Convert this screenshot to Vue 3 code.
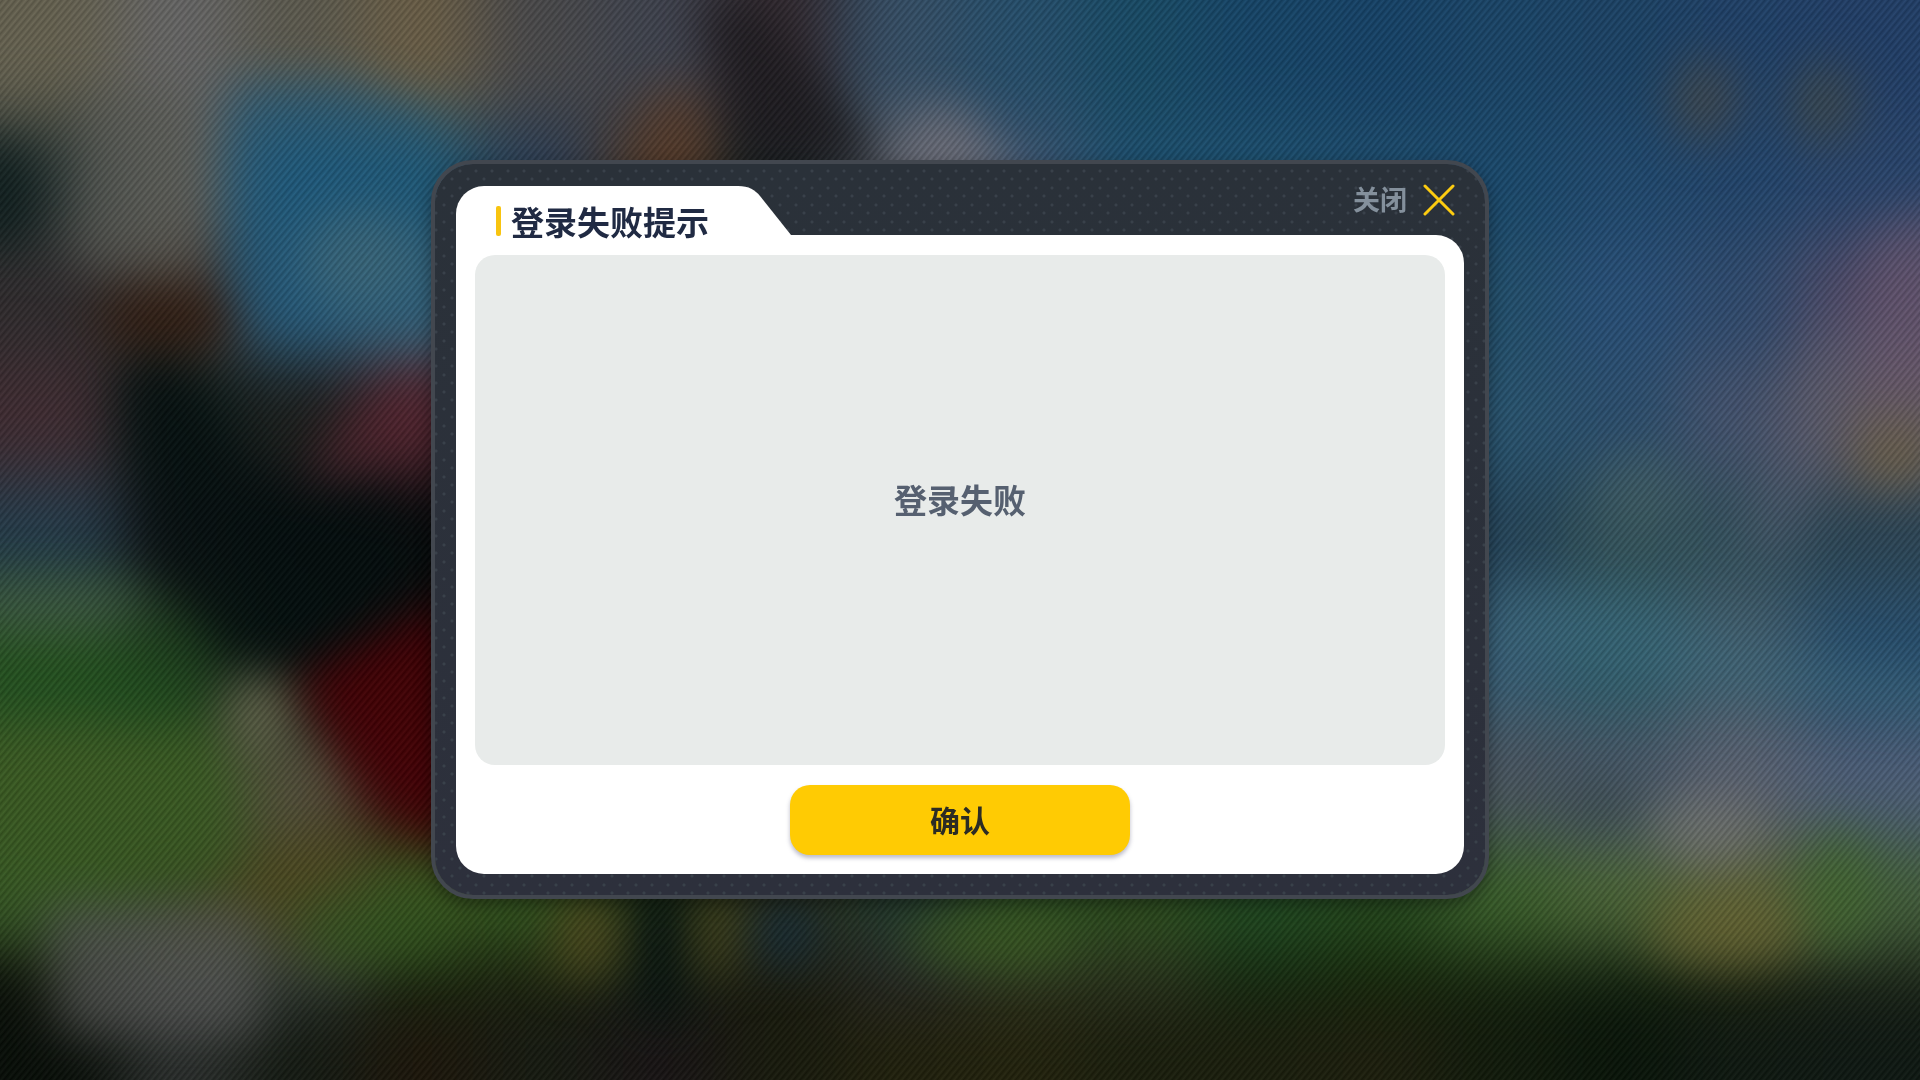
<script setup>
import { ref } from 'vue'

const open = ref(true)
const close = () => {
  open.value = false
}

// Soft scenery: a coarse colour grid plus a few blobs, blurred together.
const columnWidth = 120
const rowEdges = [0, 120, 240, 360, 480, 590, 720, 840, 950, 1000, 1080]
const palette = [
  '686452 686868 5e5c50 6c6048 4a4a4c 404450 342a30 365068 26506e 184c68 16466a 16446a 1a466a 1c4468 20426a 22406a',
  '2c3836 5e605c 1e5a7c 1e5874 2a3c54 4e3828 122020 5c6470 3a5470 1c5070 1c5070 1c4c6e 1a4a6e 204a70 22466e 2a466e',
  '302c2e 3c2e26 2c5a78 3c6478 30485c 2c2c34 202428 303c48 30506c 24506c 24506c 24506c 22506e 28507a 304c70 524c6a',
  '402c32 0c1c1a 1c1e1c 4c222c 20181c 101416 202428 303c48 30506c 24506c 24506c 24506c 285470 2c5070 465470 645c62',
  '243c4c 14181c 040c0e 06080a 04080a 04080a 202428 303c48 30506c 24506c 24506c 26465a 24445a 34545c 34525e 2c4656',
  '2c5424 1c3c1c 081410 120404 200404 200404 202428 303c48 30506c 24506c 2c5a70 386074 386078 30606e 446070 285070',
  '3c5c24 3a5c24 54503c 380406 340404 340404 202428 303c48 30506c 24506c 3c5460 485868 4a5660 485868 5c6474 4e607a',
  '345624 384e22 4a4822 38561e 30541e 1c3418 2c3018 20382c 2c5020 2c4c1c 204a20 24481c 3a602a 4c6638 5c6438 44603c',
  '181c10 484a48 3a4440 16280e 1c200c 141c10 18180c 28282a 303824 2c3420 122a0e 122608 14240c 10200c 1c240e 1c2416',
  '080e08 2a2e2c 141a12 1c160a 161a10 181414 181a0c 20200c 22220c 1a1e0c 1a1e0c 1c1e0c 101a0a 081408 0e1810 0e1812'
]

const cells = palette.flatMap((line, row) => {
  const isFirstRow = row === 0
  const isLastRow = row === palette.length - 1
  const top = rowEdges[row] - (isFirstRow ? 120 : 0)
  const bottom = rowEdges[row + 1] + (isLastRow ? 120 : 0)
  return line.split(' ').map((hex, col) => ({
    id: `${row}-${col}`,
    x: col === 0 ? -120 : col * columnWidth,
    y: top,
    width: columnWidth + (col === 0 || col === 15 ? 120 : 1),
    height: bottom - top + 1,
    fill: `#${hex}`
  }))
})
</script>

<template>
  <main class="page">
    <svg class="scenery" viewBox="0 0 1920 1080" preserveAspectRatio="none" aria-hidden="true">
      <defs>
        <filter id="wide" filterUnits="userSpaceOnUse" x="-120" y="-120" width="2160" height="1320" color-interpolation-filters="sRGB">
          <feGaussianBlur stdDeviation="34" />
        </filter>
        <filter id="soft" filterUnits="userSpaceOnUse" x="-120" y="-120" width="2160" height="1320" color-interpolation-filters="sRGB">
          <feGaussianBlur stdDeviation="23" />
        </filter>
      </defs>
      <g filter="url(#wide)">
        <rect
          v-for="cell in cells"
          :key="cell.id"
          :x="cell.x"
          :y="cell.y"
          :width="cell.width"
          :height="cell.height"
          :fill="cell.fill"
        />
      </g>
      <g filter="url(#soft)">
        <path d="M228 80H350L440 120V330H250L228 250Z" fill="#1e5c80" opacity="0.6" />
        <ellipse cx="360" cy="260" rx="60" ry="50" fill="#446c7c" opacity="0.6" />
        <path d="M-30 140H20L42 200L20 250H-30Z" fill="#081818" opacity="0.8" />
        <path d="M80 90H200V270H70Z" fill="#5c5e58" opacity="0.7" />
        <path d="M700 0L760 0L890 170H740Z" fill="#1c1a1e" opacity="0.85" />
        <ellipse cx="675" cy="135" rx="32" ry="50" fill="#5c3c28" opacity="0.7" />
        <path d="M920 110H965L1030 190H880Z" fill="#70707a" opacity="0.85" />
        <ellipse cx="165" cy="320" rx="70" ry="26" fill="#301a0e" opacity="0.85" />
        <path d="M120 370L170 350L260 480L430 520V640L320 670L230 660L150 560Z" fill="#020c0c" opacity="0.8" />
        <path d="M430 370L330 440L300 490L430 430Z" fill="#582430" opacity="0.75" />
        <path d="M-30 650H110L190 680L180 725L60 720H-30Z" fill="#1c501c" opacity="0.6" />
        <path d="M-30 580H120L150 610L100 630H-30Z" fill="#48604c" opacity="0.6" />
        <path d="M-30 730H200L240 860L100 900H-30Z" fill="#3a5c22" opacity="0.6" />
        <path d="M450 600L290 680L350 770L450 850Z" fill="#460004" opacity="0.95" />
        <ellipse cx="258" cy="714" rx="34" ry="42" fill="#686a50" opacity="0.85" />
        <path d="M150 930L330 830L350 860L190 950Z" fill="#50481c" opacity="0.7" />
        <path d="M45 905H255L262 1035H60Z" fill="#545654" opacity="0.75" />
        <rect x="-40" y="970" width="60" height="140" fill="#060c06" opacity="0.8" />
        <path d="M290 900H430L450 950L320 970Z" fill="#32561e" opacity="0.7" />
        <rect x="555" y="895" width="65" height="80" fill="#4c481c" opacity="0.9" />
        <rect x="636" y="890" width="48" height="130" fill="#06120e" />
        <rect x="696" y="890" width="36" height="85" fill="#48441c" opacity="0.9" />
        <rect x="756" y="900" width="62" height="66" fill="#142a38" opacity="0.9" />
        <ellipse cx="990" cy="940" rx="90" ry="24" fill="#3c5c20" opacity="0.8" />
        <ellipse cx="1704" cy="100" rx="34" ry="42" fill="#40484c" opacity="0.9" />
        <ellipse cx="1824" cy="104" rx="34" ry="42" fill="#3c484c" opacity="0.9" />
        <path d="M1870 230L1960 200V400L1860 400Z" fill="#745c74" opacity="0.5" />
        <path d="M1820 320L1880 330L1790 560L1740 540Z" fill="#5c6078" opacity="0.4" />
        <ellipse cx="1895" cy="455" rx="40" ry="30" fill="#746444" opacity="0.75" />
        <ellipse cx="1640" cy="490" rx="44" ry="40" fill="#486468" opacity="0.5" />
        <path d="M1500 590L1640 600L1760 650L1960 680V720L1700 690L1500 640Z" fill="#3c6c80" opacity="0.5" />
        <ellipse cx="1600" cy="805" rx="36" ry="26" fill="#38484c" opacity="0.6" />
        <ellipse cx="1705" cy="830" rx="56" ry="36" fill="#7c7c7c" opacity="0.6" />
        <ellipse cx="1725" cy="930" rx="80" ry="34" fill="#706c34" opacity="0.65" />
        <ellipse cx="1840" cy="890" rx="36" ry="60" fill="#40682c" opacity="0.7" />
      </g>
    </svg>

    <section v-if="open" class="dialog" role="dialog" aria-modal="true" aria-labelledby="dialog-title">
      <header class="header">
        <div class="tab">
          <svg class="tab-shape" viewBox="0 0 335 49" aria-hidden="true">
            <path d="M0 49V28A28 28 0 0 1 28 0H282C293 0 299 4 304 10L335 49Z" fill="#fff" />
          </svg>
          <h1 id="dialog-title" class="title">登录失败提示</h1>
        </div>
        <button class="close" type="button" @click="close">
          <span>关闭</span>
          <svg class="close-icon" viewBox="0 0 32 32" aria-hidden="true">
            <path d="M2 2L30 30M30 2L2 30" fill="none" stroke="#fdcc10" stroke-width="3" stroke-linecap="round" />
          </svg>
        </button>
      </header>
      <div class="body">
        <p class="message">登录失败</p>
        <button class="confirm" type="button" @click="close">确认</button>
      </div>
    </section>
  </main>
</template>

<style>
body {
  margin: 0;
  background: #10202c;
}
</style>

<style scoped>
.page {
  position: relative;
  isolation: isolate;
  display: flex;
  align-items: center;
  justify-content: center;
  box-sizing: border-box;
  min-height: 100vh;
  padding: 20px 24px 41px;
  overflow: hidden;
  font-family: "Noto Sans CJK SC", "Noto Sans", sans-serif;
}

.scenery {
  position: absolute;
  inset: 0;
  z-index: -2;
  width: 100%;
  height: 100%;
}

.page::before {
  content: "";
  position: absolute;
  inset: 0;
  z-index: -1;
  background: repeating-linear-gradient(
    -50deg,
    rgba(255, 255, 255, 0.04) 0,
    rgba(0, 0, 0, 0.16) 3px,
    rgba(255, 255, 255, 0.04) 5px
  );
}

.dialog {
  box-sizing: border-box;
  width: 100%;
  max-width: 1058px;
  padding: 22px 21px 21px;
  border: 4px solid #42474f;
  border-radius: 42px;
  background:
    radial-gradient(circle at 4px 4px, #39414a 1px, transparent 2px) 5px 3px / 16px 17px padding-box,
    radial-gradient(circle at 12px 12px, #39414a 1px, transparent 2px) 5px 3px / 16px 17px padding-box,
    linear-gradient(#2a3139, #2d303c) padding-box;
  background-color: #42474f;
  box-shadow: 0 6px 16px rgba(0, 0, 0, 0.35);
}

.header {
  display: flex;
  align-items: flex-start;
  justify-content: space-between;
}

.tab {
  position: relative;
  display: flex;
  align-items: center;
  box-sizing: border-box;
  width: 335px;
  height: 49px;
  padding: 20px 0 0 40px;
}

.tab-shape {
  position: absolute;
  inset: 0;
  width: 335px;
  height: 49px;
}

.title {
  position: relative;
  display: flex;
  align-items: center;
  gap: 10px;
  margin: 0;
  color: #202a43;
  font-size: 33px;
  font-weight: 700;
  line-height: 30px;
  white-space: nowrap;
}

.title::before {
  content: "";
  width: 5px;
  height: 30px;
  border-radius: 2px;
  background: #f8c410;
}

.close {
  display: flex;
  align-items: center;
  gap: 16px;
  margin: -2px 0 0;
  padding: 0 9px 0 0;
  border: 0;
  background: none;
  color: #84909c;
  font-family: inherit;
  font-size: 27px;
  font-weight: 700;
  line-height: 28px;
  cursor: pointer;
}

.close span {
  padding-bottom: 2px;
}

.close-icon {
  width: 32px;
  height: 32px;
}

.body {
  display: flex;
  flex-direction: column;
  align-items: center;
  gap: 20px;
  padding: 20px 19px 19px;
  border-radius: 0 28px 28px 28px;
  background: #fff;
}

.message {
  display: flex;
  align-items: center;
  justify-content: center;
  box-sizing: border-box;
  width: 100%;
  min-height: 510px;
  margin: 0;
  padding: 0 20px 22px;
  border-radius: 20px;
  background: #e8ebea;
  color: #566070;
  font-size: 33px;
  font-weight: 700;
  line-height: 40px;
}

.confirm {
  width: 340px;
  max-width: 100%;
  height: 70px;
  padding: 0 0 2px;
  border: 0;
  border-radius: 20px;
  background: #ffcb03;
  box-shadow: 0 3px 4px rgba(60, 60, 100, 0.35);
  color: #2c2c24;
  font-family: inherit;
  font-size: 30px;
  font-weight: 700;
  line-height: 40px;
  cursor: pointer;
}
</style>
